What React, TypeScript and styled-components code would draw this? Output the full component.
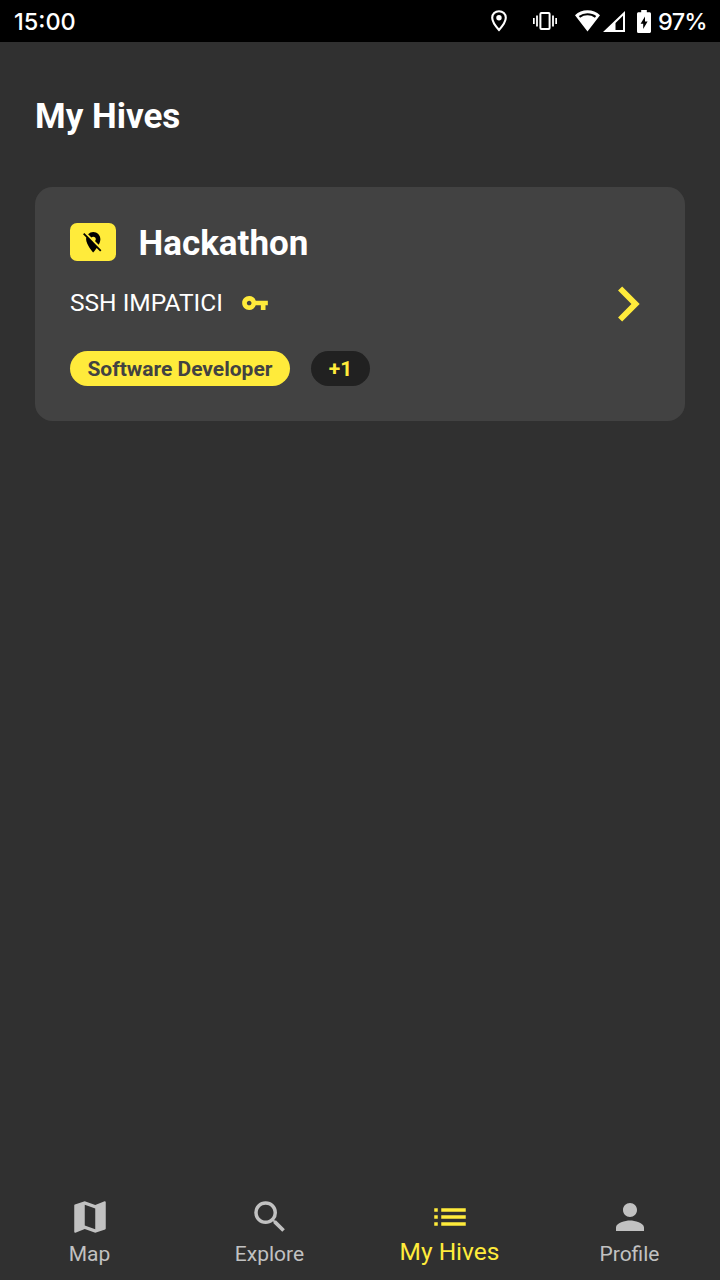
import React from "react";
import styled, { createGlobalStyle } from "styled-components";
import {
  MdChevronRight,
  MdList,
  MdLocationOff,
  MdMap,
  MdPerson,
  MdSearch,
  MdVpnKey,
} from "react-icons/md";

const yellow = "#ffeb3b";

const GlobalStyle = createGlobalStyle`
  * { box-sizing: border-box; }
  body {
    margin: 0;
    background: #303030;
    color: #fff;
    font-family: Roboto, sans-serif;
  }
  svg { display: block; flex: none; }
`;

const Screen = styled.div`
  display: flex;
  flex-direction: column;
  height: 100vh;
  min-height: 1280px;
`;

const StatusBar = styled.header`
  display: flex;
  align-items: center;
  justify-content: space-between;
  height: 42px;
  padding: 0 15px 0 14px;
  background: #000;
  font: 500 23.5px/42px Inter, sans-serif;
`;

const StatusText = styled.span`
  padding-top: 1px;
`;

const BatteryLevel = styled(StatusText)`
  width: 47px;
  letter-spacing: -0.7px;
  white-space: nowrap;
`;

const StatusIcons = styled.div`
  display: flex;
  align-items: center;
`;

const StatusGlyph = styled.svg<{ $gap: number }>`
  margin-right: ${({ $gap }) => $gap}px;
`;

const Main = styled.main`
  flex: 1;
  padding: 51px 35px 0;
`;

const PageTitle = styled.h1`
  margin: 0 0 47px;
  font-size: 35px;
  line-height: 47px;
  font-weight: 700;
`;

const Card = styled.article`
  display: flex;
  align-items: center;
  justify-content: space-between;
  height: 234px;
  padding: 0 22px 0 35px;
  border-radius: 17.5px;
  background: #424242;
`;

const CardBody = styled.div`
  display: flex;
  flex-direction: column;
`;

const TitleRow = styled.div`
  display: flex;
  align-items: center;
  gap: 23px;
  height: 42px;
`;

const LocationBadge = styled.span`
  display: flex;
  padding: 7px 10.5px;
  margin-bottom: 2px;
  border-radius: 7px;
  background: ${yellow};
  color: #000;
`;

const HiveName = styled.h2`
  margin: 0;
  padding-top: 2px;
  font-size: 35px;
  line-height: 42px;
  font-weight: 700;
`;

const OwnerRow = styled.div`
  display: flex;
  align-items: center;
  gap: 18px;
  height: 29px;
  margin: 24px 0 34px;
  font-size: 24.5px;
  color: ${yellow};
`;

const Owner = styled.span`
  color: #fff;
`;

const TagRow = styled.div`
  display: flex;
  gap: 21px;
`;

const Tag = styled.span<{ $dark?: boolean }>`
  height: 35px;
  padding: 0 18px 0 17.4px;
  border-radius: 17.5px;
  font-size: 21px;
  line-height: 36px;
  font-weight: 700;
  background: ${({ $dark }) => ($dark ? "#212121" : yellow)};
  color: ${({ $dark }) => ($dark ? yellow : "#424242")};
`;

const OpenButton = styled.button`
  display: flex;
  padding: 0;
  border: 0;
  background: none;
  color: ${yellow};
`;

const NavBar = styled.nav`
  display: grid;
  grid-template-columns: repeat(4, 1fr);
  height: 98px;
  background: #303030;
`;

const NavItem = styled.a<{ $active?: boolean }>`
  display: flex;
  flex-direction: column;
  align-items: center;
  padding-top: 14px;
  color: ${({ $active }) => ($active ? yellow : "#c1c1c1")};
`;

const NavLabel = styled.span<{ $active?: boolean }>`
  padding-right: 1px;
  font-size: ${({ $active }) => ($active ? 24.5 : 21)}px;
  line-height: ${({ $active }) => ($active ? 28 : 32)}px;
`;

const tabs = [
  { label: "Map", Icon: MdMap },
  { label: "Explore", Icon: MdSearch },
  { label: "My Hives", Icon: MdList, active: true },
  { label: "Profile", Icon: MdPerson },
];

export default function App() {
  return (
    <Screen>
      <GlobalStyle />
      <StatusBar>
        <StatusText>15:00</StatusText>
        <StatusIcons>
          <StatusGlyph $gap={26} width="16" height="22" viewBox="0 0 16 22" fill="#fff">
            <path
              d="M8 1.2C4.2 1.2 1.2 4.1 1.2 7.8 1.2 12.5 8 20 8 20s6.8-7.5 6.8-12.2C14.8 4.1 11.8 1.2 8 1.2z"
              fill="none"
              stroke="#fff"
              strokeWidth="2.1"
            />
            <circle cx="8" cy="7.8" r="2.7" />
          </StatusGlyph>
          <StatusGlyph $gap={18} width="24" height="18" viewBox="0 0 24 18" fill="#fff">
            <rect x="7.4" y="1" width="9.2" height="16" rx="1" fill="none" stroke="#fff" strokeWidth="2" />
            <path d="M0 6h1.7v6H0zM3.1 3.5h1.8v11H3.1zM19.1 3.5h1.8v11h-1.8zM22.3 6H24v6h-1.7z" />
          </StatusGlyph>
          <StatusGlyph $gap={3} width="25" height="22" viewBox="0 0 25 22" fill="#fff">
            <path
              d="M12.5.3C7.7.3 3.3 2.2 0 5.2L12.5 21.5 25 5.2C21.7 2.2 17.3.3 12.5.3zM12.5 3.3c3.3 0 6.3 1 8.7 2.7l-1.3 1.7a12.7 12.7 0 0 0-14.8 0L3.8 6a15 15 0 0 1 8.7-2.7z"
              fillRule="evenodd"
            />
          </StatusGlyph>
          <StatusGlyph $gap={12} width="22" height="21" viewBox="0 0 22 21" fill="#fff">
            <path d="M22 0v21H0zM20 4.8L12.5 12v7H20z" fillRule="evenodd" />
          </StatusGlyph>
          <StatusGlyph $gap={7} width="14" height="23" viewBox="0 0 14 23" fill="#fff">
            <path d="M4.2 0h5.6v2.2h2.7c.8 0 1.5.7 1.5 1.5v17.8c0 .8-.7 1.5-1.5 1.5h-11A1.5 1.5 0 0 1 0 21.5V3.7c0-.8.7-1.5 1.5-1.5h2.7z" />
            <path d="M8 6.5L3.6 13.7h2.6v5.4l4.4-7.5H8z" fill="#000" />
          </StatusGlyph>
          <BatteryLevel>97%</BatteryLevel>
        </StatusIcons>
      </StatusBar>

      <Main>
        <PageTitle>My Hives</PageTitle>
        <Card>
          <CardBody>
            <TitleRow>
              <LocationBadge>
                <MdLocationOff size={24.5} />
              </LocationBadge>
              <HiveName>Hackathon</HiveName>
            </TitleRow>
            <OwnerRow>
              <Owner>SSH IMPATICI</Owner>
              <MdVpnKey size={28} />
            </OwnerRow>
            <TagRow>
              <Tag>Software Developer</Tag>
              <Tag $dark>+1</Tag>
            </TagRow>
          </CardBody>
          <OpenButton aria-label="Open Hackathon">
            <MdChevronRight size={70} />
          </OpenButton>
        </Card>
      </Main>

      <NavBar>
        {tabs.map(({ label, Icon, active }) => (
          <NavItem key={label} $active={active}>
            <Icon size={42} />
            <NavLabel $active={active}>{label}</NavLabel>
          </NavItem>
        ))}
      </NavBar>
    </Screen>
  );
}
